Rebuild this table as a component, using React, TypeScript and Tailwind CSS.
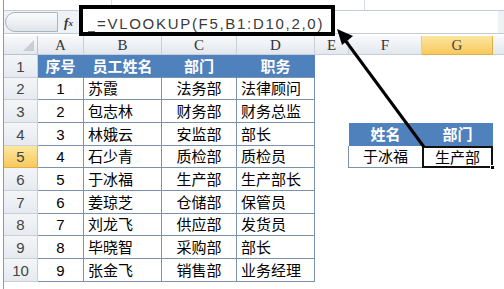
import React from "react";

const rowH = [
  "h-[23px]",
  "h-[22px]",
  "h-[23px]",
  "h-[23px]",
  "h-[22px]",
  "h-[23px]",
  "h-[23px]",
  "h-[22px]",
  "h-[23px]",
  "h-[23px]",
];

const data: string[][] = [
  ["序号", "员工姓名", "部门", "职务"],
  ["1", "苏霞", "法务部", "法律顾问"],
  ["2", "包志林", "财务部", "财务总监"],
  ["3", "林娥云", "安监部", "部长"],
  ["4", "石少青", "质检部", "质检员"],
  ["5", "于冰福", "生产部", "生产部长"],
  ["6", "姜琼芝", "仓储部", "保管员"],
  ["7", "刘龙飞", "供应部", "发货员"],
  ["8", "毕晓智", "采购部", "部长"],
  ["9", "张金飞", "销售部", "业务经理"],
];

const cols = ["A", "B", "C", "D", "E", "F", "G"];

export default function App() {
  return (
    <div className="relative w-[504px] h-[289px] overflow-hidden bg-white font-['Liberation_Sans','Noto_Sans_CJK_SC',sans-serif]">
      <div className="ml-[3px] border-l border-[#7d9cc8] h-full flex flex-col">
        {/* top strip */}
        <div className="h-[10px] flex">
          <div className="w-[107px]" />
          <div className="w-px bg-[#d8dde3]" />
          <div className="w-[252px]" />
          <div className="w-px bg-[#d8dde3]" />
        </div>
        {/* formula bar */}
        <div className="h-[24px] flex items-center border-y border-[#c3cbd5] bg-[#eef1f5]">
          <div className="ml-px w-[53px] h-[20px] rounded-l-full border border-[#aab4c0] bg-linear-to-b from-[#fbfcfd] to-[#dfe4ea]" />
          <div className="w-[21px] flex items-center justify-center text-[#333] font-['Liberation_Serif',serif]">
            <span className="italic font-bold text-[13px] leading-none">f</span>
            <span className="italic font-bold text-[9px] leading-none mt-[3px]">x</span>
          </div>
          <div className="flex-1 h-full bg-white border-l border-[#c3cbd5] mr-[6px]" />
        </div>
        <div className="h-[2px]" />
        {/* sheet grid */}
        <div className="grid grid-cols-[34px_46px_78px_75px_78px_34px_73px_71px_1fr]">
          {/* column header row */}
          <div className="h-[19px] flex items-end justify-end pr-[3px] pb-[3px] border-r border-b border-[#b8c4d2] bg-linear-to-b from-[#f8f9fb] to-[#e3e8ee]">
            <div className="w-0 h-0 border-l-[11px] border-l-transparent border-b-[11px] border-b-[#c9ced6]" />
          </div>
          {cols.map((c) => (
            <div
              key={c}
              className={
                "h-[19px] flex items-center justify-center border-r border-b text-[15px] leading-none font-['Liberation_Serif',serif] " +
                (c === "G"
                  ? "bg-linear-to-b from-[#fde6a0] to-[#f7c95a] border-[#e2b04a] text-[#444]"
                  : "bg-linear-to-b from-[#f8f9fb] to-[#e3e8ee] border-[#c7cfd9] text-[#333]")
              }
            >
              {c}
            </div>
          ))}
          <div className="h-[19px] border-b border-[#c7cfd9] bg-linear-to-b from-[#f8f9fb] to-[#e3e8ee]" />

          {data.map((row, i) => {
            const h = rowH[i];
            const isHead = i === 0;
            const rowNum = i + 1;
            const cellBase = h + " flex items-center text-[15px] leading-none border-r border-b ";
            const tableCell = isHead
              ? "bg-[#4f81bd] text-white font-bold border-[#4f81bd] border-b-[#7a93ad] "
              : "bg-white text-black border-[#7a93ad] ";
            return (
              <React.Fragment key={i}>
                <div
                  className={
                    h +
                    " flex items-center justify-center text-[15px] leading-none border-r border-b " +
                    (rowNum === 5
                      ? "bg-linear-to-b from-[#fde6a0] to-[#f7c95a] border-[#e2b04a] text-[#444]"
                      : "bg-linear-to-b from-[#f3f5f8] to-[#e6eaef] border-[#c7cfd9] text-[#444]")
                  }
                >
                  {rowNum}
                </div>
                <div className={cellBase + tableCell + "justify-center"}>{row[0]}</div>
                <div className={cellBase + tableCell + (isHead ? "justify-center" : "justify-start pl-[4px]")}>
                  {row[1]}
                </div>
                <div className={cellBase + tableCell + "justify-center"}>{row[2]}</div>
                <div className={cellBase + tableCell + (isHead ? "justify-center" : "justify-start pl-[4px]")}>
                  {row[3]}
                </div>
                {/* E */}
                <div className={h + (rowNum === 5 ? " border-r border-[#7a93ad]" : "")} />
                {/* F */}
                {rowNum === 4 ? (
                  <div className={h + " flex items-center justify-center bg-[#4f81bd] text-white font-bold text-[15px] leading-none"}>
                    姓名
                  </div>
                ) : rowNum === 5 ? (
                  <div className={h + " flex items-center justify-center bg-white text-black text-[15px] leading-none border-b border-[#7a93ad]"}>
                    于冰福
                  </div>
                ) : (
                  <div className={h} />
                )}
                {/* G */}
                {rowNum === 4 ? (
                  <div className={h + " flex items-center justify-center bg-[#4f81bd] text-white font-bold text-[15px] leading-none"}>
                    部门
                  </div>
                ) : rowNum === 5 ? (
                  <div className={h + " relative flex items-center justify-center bg-white text-black text-[15px] leading-none border-2 border-[#111]"}>
                    生产部
                    <div className="absolute right-[-4px] bottom-[-4px] w-[5px] h-[5px] bg-black border border-white" />
                  </div>
                ) : (
                  <div className={h} />
                )}
                <div className={h} />
              </React.Fragment>
            );
          })}
        </div>
      </div>

      {/* annotation: formula box */}
      <div className="absolute left-[79px] top-[5px] w-[256px] h-[31px] border-4 border-black bg-white flex items-start">
        <div className="w-[7px] h-px bg-[#666] mt-[22px] ml-[5px]" />
        <div className="ml-[2px] mt-[7px] text-[15px] leading-[15px] tracking-[1.7px] text-[#3a3a3a] whitespace-nowrap font-['Liberation_Sans',sans-serif]">
          =VLOOKUP(F5,B1:D10,2,0)
        </div>
      </div>

      {/* annotation: arrow */}
      <svg className="absolute left-0 top-0 pointer-events-none" width="504" height="289" viewBox="0 0 504 289">
        <line x1="424" y1="147" x2="345" y2="40" stroke="#000" strokeWidth="3" />
        <polygon points="337,29 353,36 342,45" fill="#000" />
      </svg>
    </div>
  );
}
